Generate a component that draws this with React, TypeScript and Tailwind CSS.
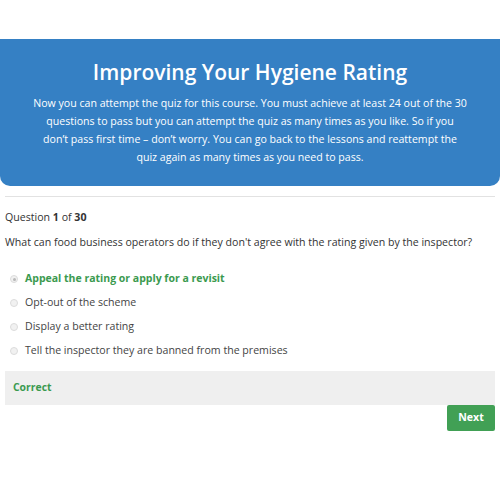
import React, { useState } from 'react';

const options = [
  'Appeal the rating or apply for a revisit',
  'Opt-out of the scheme',
  'Display a better rating',
  'Tell the inspector they are banned from the premises',
];

export default function App() {
  const [selected] = useState(0);

  return (
    <div className="w-[500px] h-[500px] bg-white pt-[39px] font-['Open_Sans',sans-serif] text-[#333]">
      <div className="bg-[#3580c4] rounded-b-[10px] pt-[18px] pb-[20px] px-[20px] text-center text-white">
        <h1 className="text-[21px] leading-[30px] font-semibold">Improving Your Hygiene Rating</h1>
        <p className="mt-[7px] text-[10.6px] leading-[18px]">
          Now you can attempt the quiz for this course. You must achieve at least 24 out of the 30
          <br />
          questions to pass but you can attempt the quiz as many times as you like. So if you
          <br />
          don’t pass first time – don’t worry. You can go back to the lessons and reattempt the
          <br />
          quiz again as many times as you need to pass.
        </p>
      </div>

      <div className="px-[5px]">
        <div className="mt-[10px] h-px bg-[#e2e2e2]" />
        <p className="mt-[11px] text-[10.6px] leading-[18px]">
          Question <span className="font-bold">1</span> of <span className="font-bold">30</span>
        </p>
        <p className="mt-[7px] text-[10.6px] leading-[18px]">
          What can food business operators do if they don't agree with the rating given by the inspector?
        </p>

        <ul className="mt-[19px] flex flex-col gap-[6px] pl-[5px]">
          {options.map((opt, i) => (
            <li key={opt} className="flex items-center gap-[7px] h-[18px]">
              <span className="w-[8px] h-[8px] rounded-full border border-[#dcdcdc] bg-[#f1f1f1] flex items-center justify-center">
                {i === selected && <span className="w-[3px] h-[3px] rounded-full bg-[#b8b8b8]" />}
              </span>
              <span
                className={
                  i === selected
                    ? 'text-[10.5px] font-bold text-[#3b9a4f]'
                    : 'text-[10.6px] text-[#444]'
                }
              >
                {opt}
              </span>
            </li>
          ))}
        </ul>

        <div className="mt-[11px] h-[34px] bg-[#efefef] flex items-center px-[8px]">
          <span className="text-[10.4px] font-bold text-[#3b9a4f]">Correct</span>
        </div>

        <div className="flex justify-end">
          <button className="w-[48px] h-[26px] rounded-[2px] bg-[#41a055] text-white text-[10.6px] font-bold">
            Next
          </button>
        </div>
      </div>
    </div>
  );
}
